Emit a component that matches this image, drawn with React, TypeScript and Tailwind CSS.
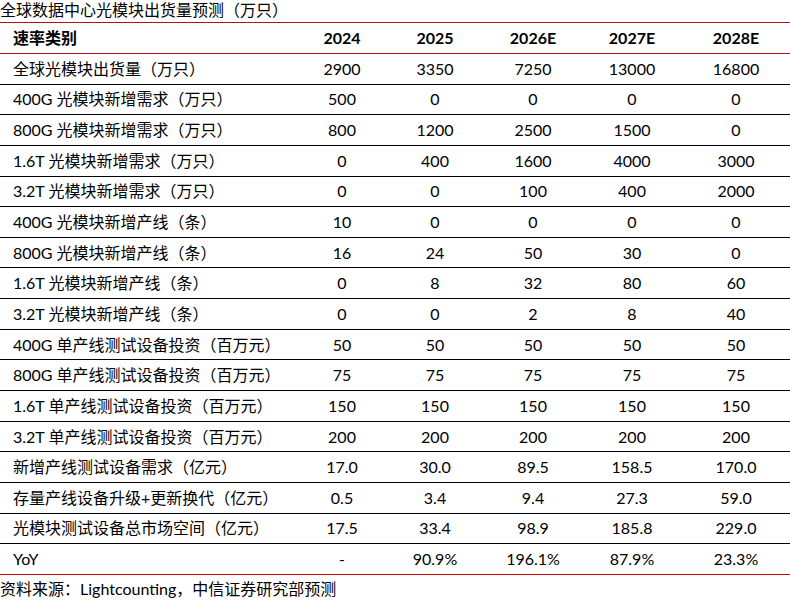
import React from "react";

const years = ["2024", "2025", "2026E", "2027E", "2028E"];

const rows: [string, string[]][] = [
  ["全球光模块出货量（万只）", ["2900", "3350", "7250", "13000", "16800"]],
  ["400G 光模块新增需求（万只）", ["500", "0", "0", "0", "0"]],
  ["800G 光模块新增需求（万只）", ["800", "1200", "2500", "1500", "0"]],
  ["1.6T 光模块新增需求（万只）", ["0", "400", "1600", "4000", "3000"]],
  ["3.2T 光模块新增需求（万只）", ["0", "0", "100", "400", "2000"]],
  ["400G 光模块新增产线（条）", ["10", "0", "0", "0", "0"]],
  ["800G 光模块新增产线（条）", ["16", "24", "50", "30", "0"]],
  ["1.6T 光模块新增产线（条）", ["0", "8", "32", "80", "60"]],
  ["3.2T 光模块新增产线（条）", ["0", "0", "2", "8", "40"]],
  ["400G 单产线测试设备投资（百万元）", ["50", "50", "50", "50", "50"]],
  ["800G 单产线测试设备投资（百万元）", ["75", "75", "75", "75", "75"]],
  ["1.6T 单产线测试设备投资（百万元）", ["150", "150", "150", "150", "150"]],
  ["3.2T 单产线测试设备投资（百万元）", ["200", "200", "200", "200", "200"]],
  ["新增产线测试设备需求（亿元）", ["17.0", "30.0", "89.5", "158.5", "170.0"]],
  ["存量产线设备升级+更新换代（亿元）", ["0.5", "3.4", "9.4", "27.3", "59.0"]],
  ["光模块测试设备总市场空间（亿元）", ["17.5", "33.4", "98.9", "185.8", "229.0"]],
  ["YoY", ["-", "90.9%", "196.1%", "87.9%", "23.3%"]],
];

const colW = ["w-[88px]", "w-[98px]", "w-[98px]", "w-[100px]", "w-[108px]"];

export default function App() {
  return (
    <div className="w-[790px] h-[603px] bg-white text-black font-['Lato','Noto_Sans_CJK_SC',sans-serif]">
      <div className="h-[22px] text-[16px] leading-[20px] whitespace-nowrap">
        全球数据中心光模块出货量预测（万只）
      </div>
      <div className="border-t border-[#b01515]">
        {/* header */}
        <div className="flex h-[31px] items-center border-b border-[#b01515] text-[16px] font-bold">
          <div className="w-[298px] pl-[13px]">速率类别</div>
          {years.map((y, i) => (
            <div key={y} className={`${colW[i]} text-center`}>
              {y}
            </div>
          ))}
        </div>
        {rows.map(([label, vals], r) => (
          <div
            key={label}
            className={`flex h-[30.65px] items-center border-b text-[16px] ${
              r === rows.length - 1 ? "border-[#d00000]" : "border-black"
            }`}
          >
            <div className="w-[298px] pl-[13px] whitespace-nowrap">{label}</div>
            {vals.map((v, i) => (
              <div key={i} className={`${colW[i]} text-center`}>
                {v}
              </div>
            ))}
          </div>
        ))}
      </div>
      <div className="pt-[3px] text-[16px] leading-[22px] whitespace-nowrap">
        资料来源：Lightcounting，中信证券研究部预测
      </div>
    </div>
  );
}
